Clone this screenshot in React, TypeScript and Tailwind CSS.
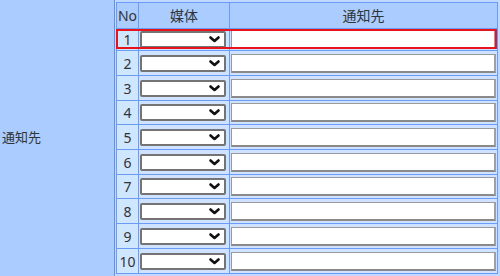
import React from "react";

const font = { fontFamily: '"Noto Sans", "Noto Sans CJK JP", sans-serif' };

function Chevron() {
  return (
    <svg width="11" height="7" viewBox="0 0 11 7" className="block">
      <polyline points="1.5,1.5 5.5,5 9.5,1.5" fill="none" stroke="#111" strokeWidth="2.6" strokeLinecap="round" strokeLinejoin="round" />
    </svg>
  );
}

function Row({ n, h, first }: { n: number; h: string; first?: boolean }) {
  return (
    <div className={`relative flex gap-px ${h}`}>
      <div className="w-[21px] bg-[#cfe6ff] flex items-center justify-center text-[14px] text-[#333]">{n}</div>
      <div className="w-[90px] bg-[#cfe2ff] flex items-center pl-[1px]">
        <div className="w-[86px] h-[17px] bg-white border-2 border-[#747474] rounded-[2px] flex items-center justify-end pr-[4px]">
          <Chevron />
        </div>
      </div>
      <div className="flex-1 bg-[#cfe2ff] flex items-center pl-[1px] pr-[1px]">
        <div className="w-full h-[19px] bg-white border border-[#9a9a9a] border-b-2 border-r-2 border-b-[#8a8a8a] border-r-[#a0a0a0]" />
      </div>
      {first && <div className="absolute -left-px right-0 top-[0px] bottom-[1px] border-2 border-[#e8141c] pointer-events-none" />}
    </div>
  );
}

export default function App() {
  const heights = ["h-[21px]", "h-[24px]", "h-[24px]", "h-[23px]", "h-[24px]", "h-[24px]", "h-[23px]", "h-[24px]", "h-[24px]", "h-[24px]"];
  return (
    <div className="w-[500px] h-[276px] bg-[#aaccff] flex" style={font}>
      <div className="w-[115px] border-r border-[#5f8ff0] flex items-center pl-[2px] text-[13px] text-[#333]">通知先</div>
      <div className="flex-1 bg-[#c2d9ff] pl-[1px] pr-[2px] pt-[2px] pb-[2px]">
        <div className="bg-[#6b9bf5] p-px flex flex-col gap-px">
          <div className="flex gap-px h-[25px]">
            <div className="w-[21px] bg-[#aaccff] flex items-center justify-center text-[14px] text-[#333]">No</div>
            <div className="w-[90px] bg-[#aaccff] flex items-center justify-center text-[14px] text-[#333]">媒体</div>
            <div className="flex-1 bg-[#aaccff] flex items-center justify-center text-[14px] text-[#333]">通知先</div>
          </div>
          {heights.map((h, i) => (
            <Row key={i} n={i + 1} h={h} first={i === 0} />
          ))}
        </div>
      </div>
    </div>
  );
}
